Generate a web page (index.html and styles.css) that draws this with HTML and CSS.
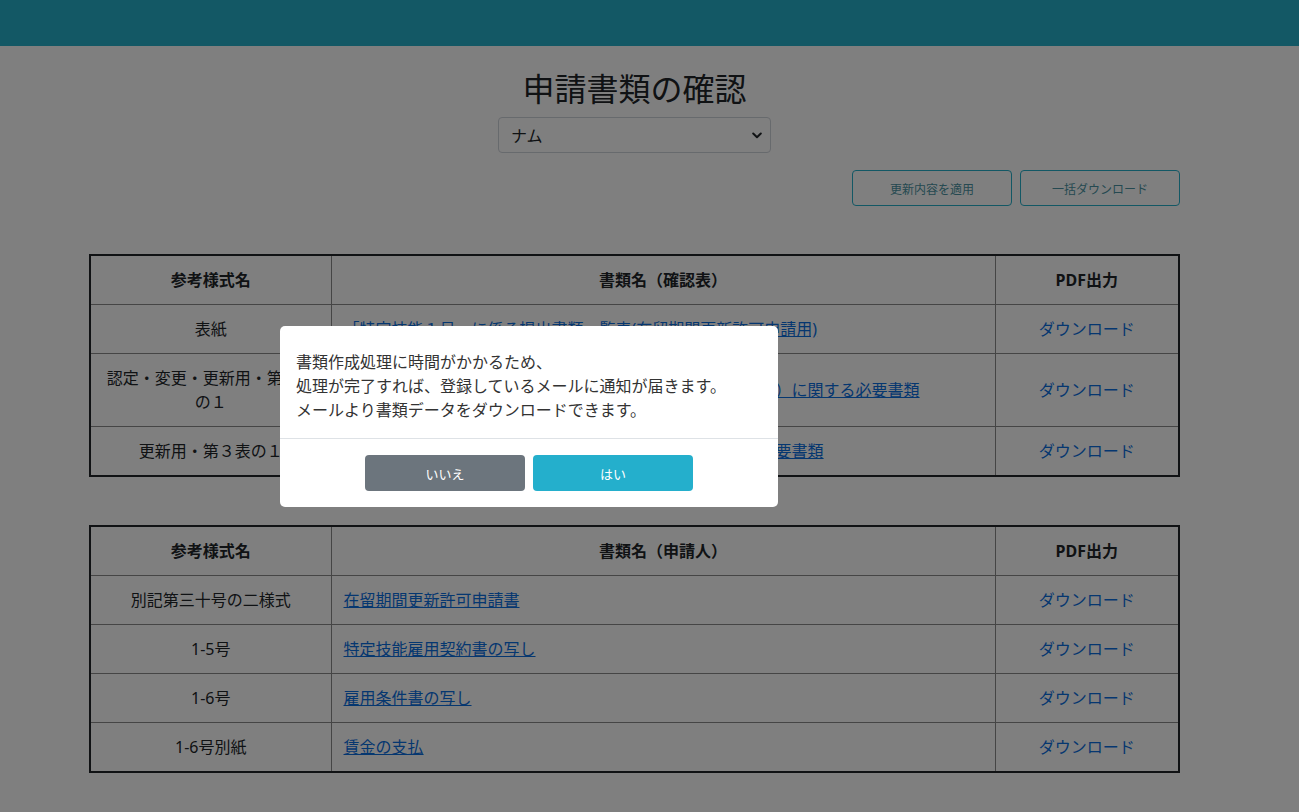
FILE: index.html
```html
<!DOCTYPE html>
<html lang="ja">
<head>
    <meta charset="UTF-8">
    <meta name="viewport" content="width=device-width, initial-scale=1.0">
    <link rel="stylesheet" href="styles.css">
    <title>申請書類の確認</title>
</head>
<body>
<header class="topbar"></header>

<main class="page">
    <h1 class="page-title">申請書類の確認</h1>
    <div class="select-row">
        <div class="fake-select">
            <span>ナム</span>
            <svg width="10" height="7" viewBox="0 0 10 7"><path d="M1.2 1.5L5 5.2 8.8 1.5" fill="none" stroke="#212529" stroke-width="2" stroke-linecap="round" stroke-linejoin="round"/></svg>
        </div>
    </div>

    <div class="actions">
        <button class="btn-outline">更新内容を適用</button>
        <button class="btn-outline">一括ダウンロード</button>
    </div>

    <table class="doc-table">
        <colgroup>
            <col class="col-form">
            <col class="col-name">
            <col class="col-pdf">
        </colgroup>
        <thead>
            <tr>
                <th>参考様式名</th>
                <th>書類名（確認表）</th>
                <th>PDF出力</th>
            </tr>
        </thead>
        <tbody>
            <tr>
                <td class="c">表紙</td>
                <td><a href="#" class="doc-link">「特定技能１号」に係る提出書類一覧表(在留期間更新許可申請用)</a></td>
                <td class="c"><a href="#" class="dl">ダウンロード</a></td>
            </tr>
            <tr>
                <td class="c">認定・変更・更新用・第１表の１</td>
                <td><a href="#" class="doc-link">「特定技能１号」に係る提出書類一覧（受入れ機関が法人等）に関する必要書類</a></td>
                <td class="c"><a href="#" class="dl">ダウンロード</a></td>
            </tr>
            <tr>
                <td class="c">更新用・第３表の１</td>
                <td><a href="#" class="doc-link">「特定技能１号」に係る提出書類（外国人本人）に関する必要書類</a></td>
                <td class="c"><a href="#" class="dl">ダウンロード</a></td>
            </tr>
        </tbody>
    </table>

    <table class="doc-table">
        <colgroup>
            <col class="col-form">
            <col class="col-name">
            <col class="col-pdf">
        </colgroup>
        <thead>
            <tr>
                <th>参考様式名</th>
                <th>書類名（申請人）</th>
                <th>PDF出力</th>
            </tr>
        </thead>
        <tbody>
            <tr>
                <td class="c">別記第三十号の二様式</td>
                <td><a href="#" class="doc-link">在留期間更新許可申請書</a></td>
                <td class="c"><a href="#" class="dl">ダウンロード</a></td>
            </tr>
            <tr>
                <td class="c">1-5号</td>
                <td><a href="#" class="doc-link">特定技能雇用契約書の写し</a></td>
                <td class="c"><a href="#" class="dl">ダウンロード</a></td>
            </tr>
            <tr>
                <td class="c">1-6号</td>
                <td><a href="#" class="doc-link">雇用条件書の写し</a></td>
                <td class="c"><a href="#" class="dl">ダウンロード</a></td>
            </tr>
            <tr>
                <td class="c">1-6号別紙</td>
                <td><a href="#" class="doc-link">賃金の支払</a></td>
                <td class="c"><a href="#" class="dl">ダウンロード</a></td>
            </tr>
        </tbody>
    </table>
</main>

<div class="backdrop"></div>

<div class="modal">
    <div class="modal-body">
        <p>書類作成処理に時間がかかるため、</p>
        <p>処理が完了すれば、登録しているメールに通知が届きます。</p>
        <p>メールより書類データをダウンロードできます。</p>
    </div>
    <div class="modal-footer">
        <button class="btn btn-gray">いいえ</button>
        <button class="btn btn-teal">はい</button>
    </div>
</div>
</body>
</html>
```

FILE: styles.css
```css
body, html {
    margin: 0;
    padding: 0;
}

body {
    font-family: "Noto Sans", "Noto Sans CJK JP", sans-serif;
    font-size: 16px;
    line-height: 1.5;
    color: #212529;
    background-color: #fff;
    overflow: hidden;
}

.topbar {
    height: 46px;
    background-color: #26b0ca;
}

.page {
    width: 1091px;
    margin-left: 89px;
    padding-top: 24px;
}

.page-title {
    margin: 0;
    font-size: 32px;
    font-weight: 400;
    line-height: 38px;
    text-align: center;
}

.select-row {
    display: flex;
    justify-content: center;
    margin-top: 9px;
}

.fake-select {
    width: 273px;
    height: 36px;
    box-sizing: border-box;
    border: 1px solid #ced4da;
    border-radius: 4px;
    padding: 0 8px 0 12px;
    display: flex;
    align-items: center;
    justify-content: space-between;
    font-family: "Noto Sans CJK JP", sans-serif;
}

.actions {
    display: flex;
    justify-content: flex-end;
    gap: 8px;
    margin-top: 17px;
}

.btn-outline {
    width: 160px;
    height: 36px;
    background: transparent;
    border: 1px solid #26b0ca;
    border-radius: 4px;
    color: #4a93a2;
    font-family: "Noto Sans CJK JP", sans-serif;
    font-size: 12px;
}

.doc-table {
    width: 100%;
    border-collapse: collapse;
    border: 2px solid #212529;
    margin-top: 48px;
    table-layout: fixed;
}

.doc-table + .doc-table {
    margin-top: 48px;
}

.col-form { width: 241px; }
.col-pdf { width: 184px; }

.doc-table th,
.doc-table td {
    border: 1px solid #8a8a8a;
    padding: 12px;
    vertical-align: middle;
    line-height: 24px;
}

.doc-table th {
    font-size: 16px;
    font-weight: 700;
    text-align: center;
}

.doc-table td.c {
    text-align: center;
}

.doc-link {
    color: #0a6ee0;
    text-decoration: underline;
}

.dl {
    color: #0a6ee0;
    text-decoration: none;
}

.backdrop {
    position: fixed;
    inset: 0;
    background-color: rgba(0, 0, 0, 0.5);
}

.modal {
    position: fixed;
    left: 280px;
    top: 326px;
    width: 498px;
    background-color: #fff;
    border-radius: 5px;
}

.modal-body {
    padding: 23px 16px 17px;
}

.modal-body p {
    margin: 0;
    font-family: "Noto Sans CJK JP", sans-serif;
    font-size: 16px;
    line-height: 24px;
    color: #333;
}

.modal-footer {
    border-top: 1px solid #dee2e6;
    padding: 16px 0;
    display: flex;
    justify-content: center;
    gap: 8px;
}

.btn {
    width: 160px;
    height: 36px;
    border: none;
    border-radius: 4px;
    color: #fff;
    font-family: "Noto Sans CJK JP", sans-serif;
    font-size: 13px;
}

.btn-gray {
    background-color: #6c757d;
}

.btn-teal {
    background-color: #24afcc;
}
```
